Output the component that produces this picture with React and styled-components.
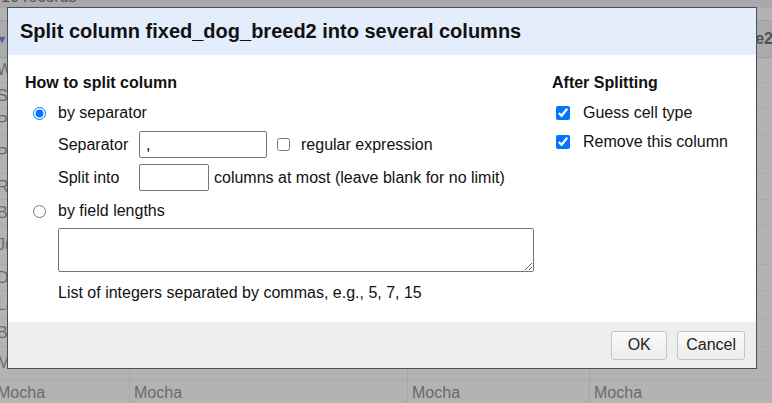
import React from "react";
import styled, { createGlobalStyle } from "styled-components";

const GlobalStyle = createGlobalStyle`
  html, body {
    margin: 0;
    padding: 0;
    overflow: hidden;
  }
  body {
    font-family: "Liberation Sans", Arial, sans-serif;
  }
`;

const rows = [
  { h: 24, cells: ["Wire", "", "", ""] },
  { h: 25, cells: ["Staff", "", "", ""] },
  { h: 25, cells: ["Pit", "", "", ""] },
  { h: 38, cells: ["Pe Ca", "", "", ""] },
  { h: 25, cells: ["Red", "", "", ""] },
  { h: 25, cells: ["Boxer", "", "", ""] },
  { h: 38, cells: ["Jug Por", "", "", ""] },
  { h: 25, cells: ["Dia", "", "", ""] },
  { h: 27, cells: ["Lab", "", "", ""] },
  { h: 27, cells: ["Beagle", "", "", ""] },
  { h: 32, cells: ["Mix", "", "", ""] },
  { h: 25, cells: ["Mocha", "Mocha", "Mocha", "Mocha"] },
];

const App = () => {
  return (
    <>
      <GlobalStyle />
      <St.Page>
        <St.Table>
          <St.TopBar>10 records</St.TopBar>
          <St.HeadRow>
            <St.HeadCell>
              <St.Arrow>▾</St.Arrow>
            </St.HeadCell>
            <St.HeadCell />
            <St.HeadCell />
            <St.HeadCell $right>breed_name2</St.HeadCell>
          </St.HeadRow>
          {rows.map((r, i) => (
            <St.Row key={i} $h={r.h}>
              {r.cells.map((c, j) => (
                <St.Cell key={j}>{c}</St.Cell>
              ))}
            </St.Row>
          ))}
        </St.Table>

        <St.Dialog>
          <St.Header>
            <St.Title>Split column fixed_dog_breed2 into several columns</St.Title>
          </St.Header>
          <St.Body>
            <St.LeftCol>
              <St.Heading>How to split column</St.Heading>
              <St.OptionRow>
                <St.Radio type="radio" name="mode" defaultChecked />
                <span>by separator</span>
              </St.OptionRow>
              <St.SubRow>
                <St.Label>Separator</St.Label>
                <St.TextInput type="text" defaultValue="," $w={128} />
                <St.Check type="checkbox" $small />
                <span>regular expression</span>
              </St.SubRow>
              <St.SubRow>
                <St.Label>Split into</St.Label>
                <St.TextInput type="text" $w={70} />
                <St.After>columns at most (leave blank for no limit)</St.After>
              </St.SubRow>
              <St.OptionRow $top={2}>
                <St.Radio type="radio" name="mode" />
                <span>by field lengths</span>
              </St.OptionRow>
              <St.Area />
              <St.Hint>List of integers separated by commas, e.g., 5, 7, 15</St.Hint>
            </St.LeftCol>
            <St.RightCol>
              <St.Heading>After Splitting</St.Heading>
              <St.CheckRow>
                <St.Check type="checkbox" defaultChecked />
                <span>Guess cell type</span>
              </St.CheckRow>
              <St.CheckRow>
                <St.Check type="checkbox" defaultChecked />
                <span>Remove this column</span>
              </St.CheckRow>
            </St.RightCol>
          </St.Body>
          <St.Footer>
            <St.Button>OK</St.Button>
            <St.Button>Cancel</St.Button>
          </St.Footer>
        </St.Dialog>
      </St.Page>
    </>
  );
};

export default App;

const St = {
  Page: styled.div`
    position: relative;
    width: 772px;
    height: 403px;
    overflow: hidden;
    background-color: #b3b3b3;
  `,
  Table: styled.div`
    display: flex;
    flex-direction: column;
    margin-left: -7px;
    width: 800px;
    color: #6a6a6a;
    font-size: 16px;
  `,
  TopBar: styled.div`
    height: 20px;
    margin-top: -12px;
    padding-left: 8px;
    background-color: #a9a9a9;
    color: #555;
    font-size: 16px;
    line-height: 18px;
  `,
  HeadRow: styled.div`
    display: grid;
    grid-template-columns: 137px 278px 182px 203px;
    height: 36px;
    margin-top: 12px;
    background-color: #ababab;
    border-top: 1px solid #9f9f9f;
    border-bottom: 1px solid #9c9c9c;
  `,
  HeadCell: styled.div`
    display: flex;
    align-items: center;
    justify-content: ${({ $right }) => ($right ? "flex-end" : "flex-start")};
    padding: 0 ${({ $right }) => ($right ? "20px" : "4px")} 0 4px;
    font-weight: bold;
    color: #505050;
    white-space: nowrap;
  `,
  Arrow: styled.span`
    margin-left: 2px;
    color: #5a5aa8;
    font-size: 12px;
  `,
  Row: styled.div`
    display: grid;
    grid-template-columns: 137px 278px 182px 203px;
    height: ${({ $h }) => $h}px;
    border-bottom: 1px dotted #a2a2a2;
  `,
  Cell: styled.div`
    display: flex;
    align-items: center;
    padding-left: 4px;
    border-right: 1px solid #a6a6a6;
    white-space: nowrap;
  `,
  Dialog: styled.div`
    position: absolute;
    left: 7px;
    top: 7px;
    width: 750px;
    height: 362px;
    box-sizing: border-box;
    border: 1px solid #44505d;
    display: flex;
    flex-direction: column;
    background-color: #fff;
    color: #111;
    font-size: 16px;
  `,
  Header: styled.div`
    height: 47px;
    display: flex;
    align-items: center;
    padding-left: 12px;
    background-color: #e3edfb;
  `,
  Title: styled.h1`
    margin: 0;
    font-size: 20px;
    font-weight: bold;
    color: #111;
  `,
  Body: styled.div`
    flex: 1;
    display: grid;
    grid-template-columns: 1fr 204px;
    padding: 19px 0 0 17px;
  `,
  LeftCol: styled.div`
    display: flex;
    flex-direction: column;
  `,
  RightCol: styled.div`
    display: flex;
    flex-direction: column;
  `,
  Heading: styled.div`
    height: 18px;
    line-height: 18px;
    font-weight: bold;
    margin-bottom: 6px;
  `,
  OptionRow: styled.div`
    display: flex;
    align-items: center;
    height: 30px;
    margin-top: ${({ $top }) => $top || 0}px;
  `,
  Radio: styled.input`
    width: 13px;
    height: 13px;
    margin: 0 12px 0 8px;
  `,
  SubRow: styled.div`
    display: flex;
    align-items: center;
    height: 33px;
    padding-left: 33px;
  `,
  Label: styled.span`
    width: 81px;
  `,
  TextInput: styled.input`
    box-sizing: border-box;
    width: ${({ $w }) => $w}px;
    height: 27px;
    padding: 0 6px;
    border: 1px solid #767676;
    border-radius: 2px;
    font-family: "Liberation Sans", Arial, sans-serif;
    font-size: 16px;
  `,
  After: styled.span`
    margin-left: 5px;
  `,
  Check: styled.input`
    width: ${({ $small }) => ($small ? "13px" : "14px")};
    height: ${({ $small }) => ($small ? "13px" : "14px")};
    margin: 0 ${({ $small }) => ($small ? "11px" : "13px")} 0
      ${({ $small }) => ($small ? "10px" : "4px")};
  `,
  CheckRow: styled.div`
    display: flex;
    align-items: center;
    height: 29px;
  `,
  Area: styled.textarea`
    box-sizing: border-box;
    width: 476px;
    height: 44px;
    margin: 2px 0 0 33px;
    border: 1px solid #767676;
    border-radius: 2px;
    resize: both;
  `,
  Hint: styled.div`
    margin: 12px 0 0 33px;
  `,
  Footer: styled.div`
    height: 46px;
    display: flex;
    align-items: center;
    justify-content: flex-end;
    gap: 10px;
    padding-right: 11px;
    background-color: #eeeeee;
  `,
  Button: styled.button`
    min-width: 56px;
    height: 29px;
    padding: 0 8px;
    border: 1px solid #c5c5c5;
    border-radius: 3px;
    background: linear-gradient(#fafafa, #ececec);
    color: #222;
    font-family: "Liberation Sans", Arial, sans-serif;
    font-size: 16px;
  `,
};
